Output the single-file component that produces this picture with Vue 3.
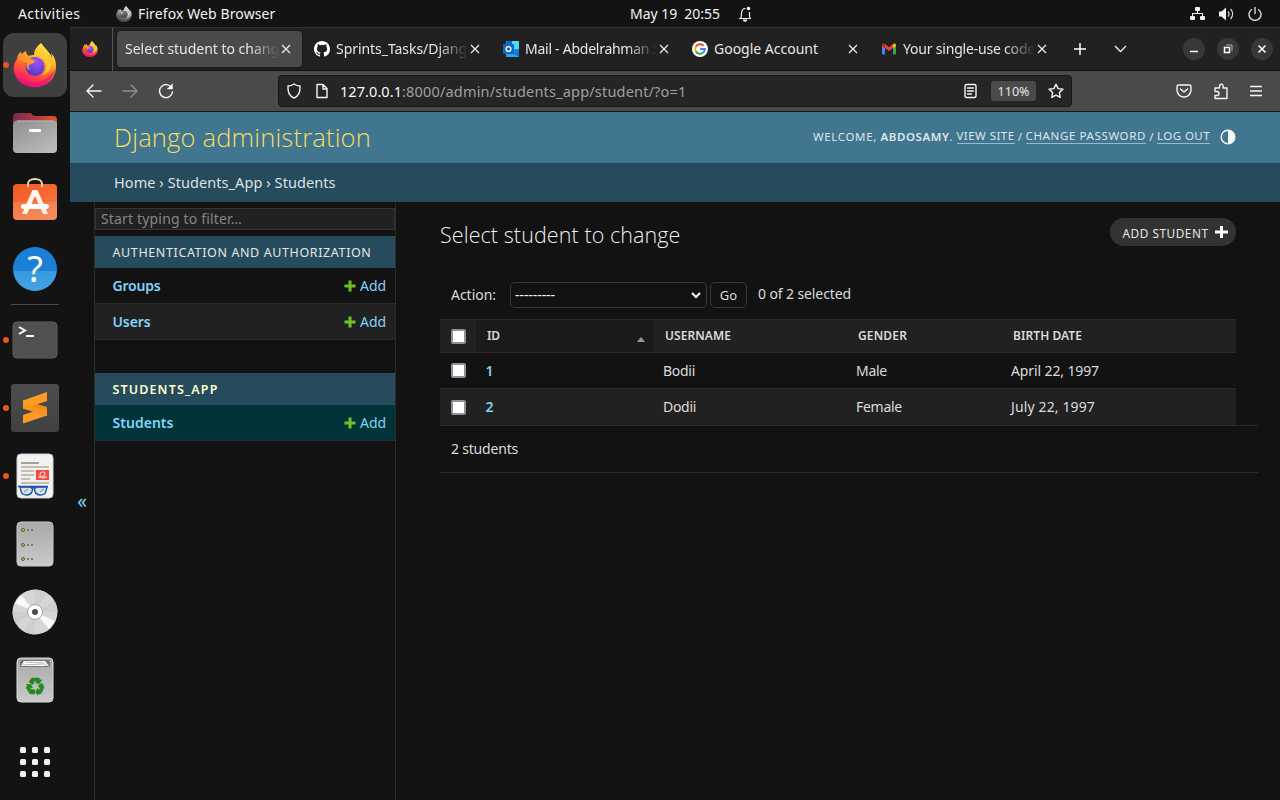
<script setup>
// Adjusts tracking so that a label spans the given width in pixels.
const vFit = {
  mounted(el, { value }) {
    const n = el.textContent.length
    const natural = el.getBoundingClientRect().width
    el.style.letterSpacing = (value - natural) / n + 'px'
  }
}

const tabs = [
  { icon: 'github', label: 'Sprints_Tasks/Djang', width: 131, fade: true },
  { icon: 'outlook', label: 'Mail - Abdelrahman S', width: 135, fade: true },
  { icon: 'google', label: 'Google Account', width: 104, fade: false },
  { icon: 'gmail', label: 'Your single-use code', width: 132, fade: true }
]

const groups = [
  { title: 'AUTHENTICATION AND AUTHORIZATION', width: 259, models: [{ name: 'Groups', width: 48 }, { name: 'Users', width: 38 }] },
  { title: 'STUDENTS_APP', width: 106, current: true, models: [{ name: 'Students', width: 61 }] }
]

const rows = [
  { id: 1, name: 'Bodii', nw: 32, gender: 'Male', gw: 31, birth: 'April 22, 1997', bw: 88 },
  { id: 2, name: 'Dodii', nw: 33, gender: 'Female', gw: 46, birth: 'July 22, 1997', bw: 84 }
]
</script>

<template>
  <div class="desktop">
    <svg class="defs" width="0" height="0">
      <defs>
        <linearGradient id="ffBody" x1="0.8" y1="0" x2="0.35" y2="1">
          <stop offset="0" stop-color="#fff44f" /><stop offset=".35" stop-color="#ffb52b" />
          <stop offset=".6" stop-color="#ff6a33" /><stop offset=".82" stop-color="#ff2f52" /><stop offset="1" stop-color="#e5107e" />
        </linearGradient>
        <radialGradient id="ffGlobe" cx=".6" cy=".25" r=".8">
          <stop offset="0" stop-color="#a452f5" /><stop offset=".55" stop-color="#7543e5" /><stop offset="1" stop-color="#4a37b0" />
        </radialGradient>
        <symbol id="firefox" viewBox="0 0 44 44">
          <path fill="url(#ffBody)" d="M28 0c-5 4-7 8-7 12-2 0-4 0-5 1-3-2-3-4-3-5-3 1-4 3-4 3-2-1-1-3-1-3-3 3-4 6-4 8C1 20 0 24 1 29c2 9 10 15 21 15 13 0 21-9 21-21 0-6-2-10-5-13 1 2 1 4 1 5-1-4-4-6-6-9-3-3-4-5-5-6z" />
          <path fill="#e9127d" d="M2 30c5 10 15 13 27 8 6-3 10-7 13-12-2 11-10 18-20 18C12 44 5 39 2 30z" opacity=".75" />
          <circle cx="22" cy="23.500" r="9.500" fill="url(#ffGlobe)" />
          <path fill="#ff9a27" d="M5 16c3-2 7-2 10-1 2 1 6 1 7 3-1 3-5 3-6 4-1 1 0 4 1 5-4-1-4-5-3-7-3-1-5-3-9-4z" />
          <path fill="#ffcf37" d="M21 13c4-1 9 1 11 5 3 5 1 12-4 14 9-1 12-9 9-15-2-4-7-8-8-13-3 2-3 6-2 8-2-1-4-1-6 1z" opacity=".8" />
        </symbol>
      </defs>
    </svg>

    <header class="topbar">
      <span v-fit="62.500" class="activities">Activities</span>
      <span class="app">
        <svg class="gray" width="16" height="16"><use href="#firefox" /></svg>
        <span v-fit="137.500">Firefox Web Browser</span>
      </span>
      <span class="clock"><span v-fit="90">May 19&nbsp; 20:55</span>
        <svg width="14" height="16" viewBox="0 0 14 16" fill="none" stroke="#f2f2f2" stroke-width="1.200">
          <path d="M1 12.500h12M2.500 12.500c1-1 1-2 1-5C3.500 4 5 2.500 7.500 2.500M11.500 6v4c0 1 .2 2 1 2.500" /><circle cx="10.500" cy="2.500" r="1.200" fill="#f2f2f2" /><path d="M5.500 14a1.500 1.200 0 0 0 3 0z" fill="#f2f2f2" />
        </svg>
      </span>
      <span class="tray">
        <svg width="15" height="14" viewBox="0 0 15 14" fill="#f2f2f2"><rect x="5" width="5" height="4" rx="1" /><rect y="9" width="5" height="4" rx="1" /><rect x="10" y="9" width="5" height="4" rx="1" /><path d="M7 4h1v2h5v3h-1V7H3v2H2V6h5z" /></svg>
        <svg width="15" height="14" viewBox="0 0 15 14"><path d="M0 4.500h2.500L7 .5v13L2.500 9.500H0z" fill="#f2f2f2" /><path d="M9 4.500a3.500 3.500 0 0 1 0 5M11.500 2a7 7 0 0 1 0 10" fill="none" stroke="#ddd" stroke-width="1.200" /></svg>
        <svg width="14" height="14" viewBox="0 0 14 14" fill="none" stroke="#e8e8e8" stroke-width="1.300"><path d="M4 2.200a6 6 0 1 0 6 0M7 0v7" /></svg>
      </span>
    </header>

    <div class="body">
      <nav class="dock">
        <div class="slot active run"><svg width="44" height="44"><use href="#firefox" /></svg></div>
        <div class="slot">
          <svg width="46" height="42" viewBox="0 0 46 42">
            <defs>
              <linearGradient id="fold"><stop offset="0" stop-color="#77294f" /><stop offset=".5" stop-color="#b03a40" /><stop offset="1" stop-color="#e95420" /></linearGradient>
              <linearGradient id="foldFront" x2=".7" y2="1"><stop offset="0" stop-color="#8e8e8e" /><stop offset="1" stop-color="#b9b9b9" /></linearGradient>
            </defs>
            <path d="M1 5a4 4 0 0 1 4-4h13c2 0 2 3 5 3h18a4 4 0 0 1 4 4v14H1z" fill="url(#fold)" />
            <rect x="1" y="8.500" width="44" height="32.500" rx="4" fill="url(#foldFront)" /><path d="M5 9h36" stroke="#b5b5b5" />
            <rect x="17" y="17" width="12" height="3" rx="1" fill="#fff" />
          </svg>
        </div>
        <div class="slot">
          <svg class="lift" width="46" height="44" viewBox="0 0 46 44">
            <defs><linearGradient id="soft" x2=".6" y2="1"><stop offset="0" stop-color="#f4571f" /><stop offset="1" stop-color="#f37b43" /></linearGradient></defs>
            <rect x="1" y="7" width="44" height="36" rx="4" fill="url(#soft)" /><path d="M1 25h44v14a4 4 0 0 1-4 4H5a4 4 0 0 1-4-4z" fill="#fff" opacity=".12" />
            <path d="M16 10V7c0-3 3-5 7-5s7 2 7 5v3" fill="none" stroke="#f4d9a5" stroke-width="2" />
            <path d="M20.500 13h5L36 37h-5l-8-18-8 18h-5z" fill="#fff3ec" /><rect x="9" y="27" width="28" height="5" rx="2.500" fill="#fff" />
          </svg>
        </div>
        <div class="slot"><div class="help"><span>?</span></div></div>
        <i class="divider"></i>
        <div class="slot run">
          <svg width="46" height="38" viewBox="0 0 46 38"><rect x="1" y="1" width="44" height="36" rx="4" fill="#505050" stroke="#5e5e5e" /><path d="M7 6l6 3.500L7 13" fill="none" stroke="#fff" stroke-width="2" /><path d="M14 15h8" stroke="#fff" stroke-width="2" /></svg>
        </div>
        <div class="slot run">
          <svg width="48" height="48" viewBox="0 0 48 48"><defs><linearGradient id="sub" x2="0" y2="1"><stop offset="0" stop-color="#4d4d4d" /><stop offset="1" stop-color="#404040" /></linearGradient></defs><rect width="48" height="48" rx="3" fill="url(#sub)" /><path d="M12 31l24-8v8.500L12 39.500z" fill="#ff9a22" /><path d="M12 16v8.500l24 7.500v-9l-12-3.500z" fill="#f08c16" /><path d="M12 16.500L36 8v9l-12 4-12 3.500z" fill="#ff9a22" /><path d="M12 24.500v-4l24 6v5.500z" fill="#f99420" /></svg>
        </div>
        <div class="slot run">
          <svg width="38" height="46" viewBox="0 0 38 46">
            <rect x="1" y="1" width="36" height="44" rx="4" fill="#f1f1f1" stroke="#d4d4d4" />
            <path d="M5 10h18" stroke="#aba08c" stroke-width="2" /><path d="M5 14h28M5 18h13M5 22h13M5 26h9M5 30h28" stroke="#c6bdb0" stroke-width="2" />
            <rect x="20" y="17" width="13" height="10" fill="#f04b43" /><path d="M22 24c3 1 7-1 7-3.500s-5-2-5 1.500 4 3.500 7 1.500" fill="none" stroke="#ffd3ce" stroke-width="1.200" />
            <path d="M4 34h10q3 0 2.500 3-1 5-6 5T5 38zM31 34H21q-3 0-2.500 3 1 5 6 5t5.500-4z" fill="#d3d9e2" fill-opacity=".8" stroke="#1b56a8" stroke-width="1.400" />
            <path d="M2 33.500h30M15 35.500q2.500-2 5 0" fill="none" stroke="#1b56a8" stroke-width="1.600" /><path d="M8 39l4-3M24 39l4-3" stroke="#888" />
          </svg>
        </div>
        <div class="slot">
          <svg width="38" height="46" viewBox="0 0 38 46"><defs><linearGradient id="metal" x2="0" y2="1"><stop offset="0" stop-color="#a9a9a9" /><stop offset="1" stop-color="#cacaca" /></linearGradient></defs>
            <rect x="1" y="1" width="36" height="44" rx="4" fill="url(#metal)" stroke="#ccc" />
            <g v-for="y in [9, 24, 38]" :key="y"><circle cx="7" :cy="y" r="1.600" fill="#8bc34a" stroke="#5f6b48" /><path :d="`M11 ${y}h2M15 ${y}h2`" stroke="#777" stroke-width="2" /></g>
          </svg>
        </div>
        <div class="slot">
          <svg width="46" height="46" viewBox="0 0 46 46"><clipPath id="disc"><circle cx="23" cy="23" r="22.500" /></clipPath><g clip-path="url(#disc)"><path d="M0 0h46v46H0z" fill="#d6d6d6" /><path d="M23 23V0h14zM23 23h23V11zM23 23L0 23v14zM23 23v23H10z" fill="#cecece" /><path d="M23 23L3 14l6-8zM23 23l20 9-6 8z" fill="#fafafa" /></g><circle cx="23" cy="23" r="7.500" fill="#fff" stroke="#afa58e" /><circle cx="23" cy="23" r="3" fill="#4d4d4d" /></svg>
        </div>
        <div class="slot">
          <svg width="38" height="46" viewBox="0 0 38 46"><rect x="1" y="1" width="36" height="44" rx="4" fill="url(#metal)" stroke="#ddd" /><path d="M4 10V5q0-2 2-2h26q2 0 2 2v5z" fill="#777" /><path d="M5 9l3-5h21l4 5z" fill="#fff" /><path d="M6 8l22-1 5 3M9 5l19 1" stroke="#999" fill="none" stroke-width=".7" />
            <text x="19" y="37.500" class="recycle">♻</text>
          </svg>
        </div>
        <div class="launcher"><i v-for="n in 9" :key="n"></i></div>
      </nav>

      <section class="window">
        <div class="tabbar">
          <div class="pinned"><svg width="16" height="16"><use href="#firefox" /></svg></div>
          <div class="tab selected"><span class="label fade"><span v-fit="154">Select student to chang</span></span>
            <svg class="x" width="10" height="10" viewBox="0 0 10 10"><path d="M1 1l8 8M9 1l-8 8" /></svg>
          </div>
          <div v-for="t in tabs" :key="t.icon" class="tab">
            <svg v-if="t.icon === 'github'" width="16" height="16" viewBox="0 0 16 16" fill="#fff"><path d="M8 0C3.580 0 0 3.580 0 8c0 3.540 2.290 6.530 5.470 7.590.4.070.55-.17.55-.38 0-.19-.01-.82-.01-1.490-2.010.37-2.530-.49-2.690-.94-.09-.23-.48-.94-.82-1.130-.28-.15-.68-.52-.01-.53.63-.01 1.080.58 1.230.82.72 1.210 1.870.87 2.330.66.07-.52.28-.87.51-1.070-1.780-.2-3.640-.89-3.640-3.950 0-.87.31-1.590.82-2.150-.08-.2-.36-1.020.08-2.120 0 0 .67-.21 2.200.82a7.600 7.600 0 0 1 4 0c1.530-1.040 2.200-.82 2.200-.82.44 1.100.16 1.920.08 2.120.51.56.82 1.270.82 2.150 0 3.070-1.870 3.750-3.650 3.950.29.25.54.73.54 1.480 0 1.070-.01 1.930-.01 2.200 0 .21.15.46.55.38A8.010 8.010 0 0 0 16 8c0-4.420-3.580-8-8-8z" /></svg>
            <svg v-else-if="t.icon === 'outlook'" width="16" height="16" viewBox="0 0 16 16"><path d="M3 0h13v16H3z" fill="#1490df" /><path d="M9 0h7v8H9z" fill="#50d9ff" /><path d="M4 0h5v5H4z" fill="#0a68c0" /><path d="M3 8l7 4 6-4v8H3z" fill="#28a8ea" /><path d="M9 12l7 4V8z" fill="#1678cf" /><rect y="3" width="11" height="10" rx="1" fill="#1066b8" /><circle cx="5.500" cy="8" r="2.400" fill="none" stroke="#fff" stroke-width="1.400" /></svg>
            <svg v-else-if="t.icon === 'google'" width="16" height="16" viewBox="0 0 16 16"><circle cx="8" cy="8" r="8" fill="#fff" /><g fill="none" stroke-width="2"><path d="M11.500 4.700A4.900 4.900 0 0 0 3.700 5.700" stroke="#ea4335" /><path d="M3.700 5.700a4.900 4.900 0 0 0 0 4.600" stroke="#fbbc05" /><path d="M3.700 10.300a4.900 4.900 0 0 0 7.500 1.300" stroke="#34a853" /><path d="M11.200 11.600A4.600 4.600 0 0 0 12.900 8H8" stroke="#4285f4" /></g></svg>
            <svg v-else width="16" height="16" viewBox="0 0 16 16"><path d="M1 4h3v9.500H2a1 1 0 0 1-1-1z" fill="#4285f4" /><path d="M12 4h3v8.500a1 1 0 0 1-1 1h-2z" fill="#34a853" /><path d="M1 6V4c0-1.800 2-2 3-1l4 3.200L12 3v4L8 10 4 7z" fill="#ea4335" /><path d="M1 4c0-1.800 2-2 3-1v4L1 5z" fill="#c5221f" /><path d="M12 3c1-1 3-.8 3 1v1l-3 2.500z" fill="#fbbc04" /></svg>
            <span class="label" :class="{ fade: t.fade }"><span v-fit="t.width">{{ t.label }}</span></span>
            <svg class="x" width="10" height="10" viewBox="0 0 10 10"><path d="M1 1l8 8M9 1l-8 8" /></svg>
          </div>
          <svg class="plus" width="12" height="12" viewBox="0 0 12 12"><path d="M6 0v12M0 6h12" /></svg>
          <svg class="chevron" width="13" height="8" viewBox="0 0 13 8"><path d="M1 1l5.500 5.500L12 1" /></svg>
          <div class="controls">
            <span><svg width="10" height="10" viewBox="0 0 10 10"><path d="M1 7.500h8" /></svg></span>
            <span><svg width="10" height="10" viewBox="0 0 10 10"><path d="M1.500 3.500h5v5h-5z" /><path d="M3 1h6v6" opacity=".6" stroke-width="1" /></svg></span>
            <span><svg width="10" height="10" viewBox="0 0 10 10"><path d="M1.500 1.500l7 7M8.500 1.500l-7 7" /></svg></span>
          </div>
        </div>

        <div class="toolbar">
          <svg class="back" width="16" height="14" viewBox="0 0 16 14"><path d="M7 1L1 7l6 6M1 7h14" /></svg>
          <svg class="forward" width="16" height="14" viewBox="0 0 16 14"><path d="M9 1l6 6-6 6M15 7H1" /></svg>
          <svg class="reload" width="16" height="16" viewBox="0 0 16 16"><path d="M13.500 4.500A6.500 6.500 0 1 0 14.500 9" /><path d="M14.500 1v5h-5z" fill="#fff" stroke-width=".5" /></svg>
          <div class="urlbar">
            <svg width="16" height="16" viewBox="0 0 16 16"><path d="M8 1c2 1.500 4 2 6 2 .5 6-1 10-6 12C3 13 1.500 9 2 3c2 0 4-.5 6-2z" /></svg>
            <svg class="page-icon" width="16" height="16" viewBox="0 0 16 16"><path d="M3 1.500h6l4 4v9H3zM9 2v4h4" /></svg>
            <span class="url"><b v-fit="62">127.0.0.1</b><span v-fit="284.500">:8000/admin/students_app/student/?o=1</span></span>
            <svg class="reader" width="14" height="16" viewBox="0 0 14 16"><rect x="1" y="1.500" width="11" height="13" rx="1.500" /><path d="M3.500 5h6M3.500 8h6M3.500 11h4" /></svg>
            <span class="zoom">110%</span>
            <svg width="16" height="16" viewBox="0 0 16 16"><path d="M8 1.200l2.100 4.400 4.800.6-3.500 3.400.8 4.800L8 12.100l-4.200 2.300.8-4.800L1.100 6.200l4.800-.6z" /></svg>
          </div>
          <div class="tools">
            <svg width="16" height="14" viewBox="0 0 16 14"><path d="M2.500 1h11Q15 1 15 2.500V6a7 7 0 0 1-14 0V2.500Q1 1 2.500 1zM4.500 5L8 8l3.500-3" /></svg>
            <svg width="16" height="17" viewBox="0 0 16 17"><path d="M2 8.500V5h4.500V3a1.800 1.800 0 0 1 3.600 0v2H14v10.500H2v-3h2a2 2 0 0 0 0-4z" /></svg>
            <svg width="12" height="12" viewBox="0 0 12 12"><path d="M0 1.500h12M0 6h12M0 10.500h12" /></svg>
          </div>
        </div>

        <div class="site-header">
          <h1 v-fit="257">Django administration</h1>
          <div class="user-tools">
            <span v-fit="67.500">WELCOME,&nbsp;</span><strong v-fit="69">ABDOSAMY</strong><span v-fit="7">.&nbsp;</span>
            <a v-fit="58">VIEW SITE</a><span class="slash">/</span><a v-fit="120.500">CHANGE PASSWORD</a><span class="slash">/</span><a v-fit="53">LOG OUT</a>
            <svg width="16" height="16" viewBox="0 0 16 16"><circle cx="8" cy="8" r="6.800" fill="none" stroke="#f7f7f7" stroke-width="1.400" /><path d="M8 1a7 7 0 0 1 0 14z" fill="#f7f7f7" /></svg>
          </div>
        </div>
        <div class="breadcrumbs"><span v-fit="221.500">Home › Students_App › Students</span></div>

        <div class="content">
          <div class="toggle">«</div>
          <aside>
            <div class="filter"><span v-fit="141">Start typing to filter…</span></div>
            <div v-for="g in groups" :key="g.title" class="module" :class="{ current: g.current }">
              <div class="caption"><span v-fit="g.width">{{ g.title }}</span></div>
              <div v-for="m in g.models" :key="m.name" class="model">
                <b v-fit="m.width">{{ m.name }}</b>
                <span class="add"><svg width="12" height="12" viewBox="0 0 12 12"><path d="M6 .5v11M.5 6h11" stroke="#70bf2b" stroke-width="3" /></svg><span v-fit="26">Add</span></span>
              </div>
            </div>
          </aside>
          <main>
            <div class="title-row">
              <h2 v-fit="240.500">Select student to change</h2>
              <a class="add-student"><span v-fit="86">ADD STUDENT</span><svg width="13" height="12" viewBox="0 0 13 12"><path d="M6.500 0v12M0 6h13" stroke="#fff" stroke-width="3" /></svg></a>
            </div>
            <div class="actions">
              <span v-fit="45" class="action-label">Action:</span>
              <div class="select"><span v-fit="40">---------</span><svg width="10" height="7" viewBox="0 0 10 7"><path d="M1 1l4 4 4-4" fill="none" stroke="#fff" stroke-width="2" /></svg></div>
              <div class="go">Go</div>
              <span v-fit="93" class="count">0 of 2 selected</span>
            </div>
            <div class="table">
              <div class="row head">
                <div><i class="check"></i></div>
                <div class="sorted"><span v-fit="13">ID</span><i class="arrow"></i></div>
                <div><span v-fit="66">USERNAME</span></div><div><span v-fit="49">GENDER</span></div><div><span v-fit="69">BIRTH DATE</span></div>
              </div>
              <div v-for="r in rows" :key="r.id" class="row">
                <div><i class="check"></i></div><div class="id">{{ r.id }}</div>
                <div><span v-fit="r.nw">{{ r.name }}</span></div><div><span v-fit="r.gw">{{ r.gender }}</span></div><div><span v-fit="r.bw">{{ r.birth }}</span></div>
              </div>
            </div>
            <div class="paginator"><span v-fit="67">2 students</span></div>
          </main>
        </div>
      </section>
    </div>
  </div>
</template>

<style>
body { background: #121212; }
</style>

<style scoped>
* { box-sizing: border-box; }
.desktop { width: 1280px; height: 800px; overflow: hidden; background: #131313; color: #e6e6e6; font: 14.500px/20px "Noto Sans", "Open Sans", sans-serif; white-space: nowrap; position: relative; display: flex; flex-direction: column; }
.defs { position: absolute; }
svg { flex: none; display: block; }
span, b, strong, a { display: inline-block; }
.topbar { height: 27px; flex: none; display: flex; align-items: center; padding-left: 18px; color: #f2f2f2; font-size: 14px; }
.app { display: flex; align-items: center; gap: 6px; margin-left: 35.500px; }
.gray { filter: grayscale(1); }
.clock { display: flex; align-items: center; gap: 18px; margin-left: 354.500px; }
.tray { display: flex; align-items: center; gap: 14px; margin-left: auto; margin-right: 18px; }
.body { flex: 1; display: flex; min-height: 0; }
.dock { width: 70px; flex: none; padding-top: 6px; display: flex; flex-direction: column; align-items: center; }
.slot { width: 64px; height: 64px; flex: none; display: flex; align-items: center; justify-content: center; border-radius: 11px; position: relative; margin-bottom: 4px; }
.slot.active { background: #3f3f3f; }
.slot.run::before { content: ""; position: absolute; left: 0; top: 29px; width: 6px; height: 6px; border-radius: 50%; background: #e95420; }
.lift { margin-top: -5px; }
.help { width: 44px; height: 44px; border-radius: 50%; background: linear-gradient(#1b7fd6 0 54%, #359ae0 54%, #46a4e6); display: flex; align-items: center; justify-content: center; font: 36px/44px "Noto Sans", sans-serif; color: #fff; }
.recycle { font: 24px "DejaVu Sans", sans-serif; text-anchor: middle; fill: #23891b; stroke: #23891b; stroke-width: .6px; }
.divider { width: 48px; height: 1px; flex: none; background: #4a4a4a; margin: -1px 0 3px; }
.launcher { display: grid; grid-template-columns: repeat(3, 6px); gap: 6px; margin-top: 31px; }
.launcher i { width: 6px; height: 6px; background: #f2f2f2; border-radius: 1.500px; }
.window { flex: 1; min-width: 0; display: flex; flex-direction: column; }
.tabbar { height: 44px; flex: none; background: #212121; border-top: 1px solid #333; border-bottom: 1px solid #131313; display: flex; align-items: center; }
.pinned { width: 43px; height: 43px; border-right: 1px solid #555; padding-left: 12px; display: flex; align-items: center; }
.tab { width: 189px; height: 36px; flex: none; display: flex; align-items: center; padding: 0 11px 0 12px; gap: 6px; font-size: 14px; }
.tab.selected { width: 185px; margin: 0 0 0 4px; background: #4a4a4a; border-radius: 4px; padding: 0 11px 0 8px; box-shadow: 0 0 2px #111; }
.label { flex: 1; min-width: 0; overflow: hidden; margin-right: -4px; }
.fade { mask-image: linear-gradient(90deg, #000 calc(100% - 30px), transparent); }
.x { stroke: #eee; stroke-width: 1.200; fill: none; }
.plus { margin-left: 15.500px; stroke: #fff; stroke-width: 1.500; }
.chevron { margin-left: 28px; fill: none; stroke: #eee; stroke-width: 1.400; }
.controls { display: flex; gap: 12px; margin-left: auto; margin-right: 7px; }
.controls span { width: 22px; height: 22px; border-radius: 50%; background: #383838; display: flex; align-items: center; justify-content: center; }
.controls svg { fill: none; stroke: #fff; stroke-width: 1.500; }
.toolbar { height: 41px; flex: none; background: #4a4a4a; border-bottom: 1px solid #171717; display: flex; align-items: center; padding-left: 16px; }
.toolbar svg { fill: none; stroke: #f6f6f6; stroke-width: 1.400; stroke-linejoin: round; stroke-linecap: round; }
.forward { margin-left: 20px; opacity: .4; }
.reload { margin-left: 20px; }
.urlbar { width: 794px; height: 32px; margin-left: 104px; background: #252525; border: 1px solid #171717; border-radius: 4px; display: flex; align-items: center; padding: 0 7px; }
.page-icon { margin-left: 12px; }
.url { margin-left: 10px; color: #a0a0a0; font-size: 14.500px; }
.url b { color: #fafafa; font-weight: 400; }
.reader { margin-left: auto; }
.zoom { width: 45px; height: 20px; margin: 0 12px 0 13px; border-radius: 3px; background: #4a4a4a; text-align: center; font-size: 12.500px; line-height: 21px; }
.tools { display: flex; align-items: center; gap: 21px; margin-left: auto; margin-right: 18px; }
.site-header { height: 51px; flex: none; background: #417690; display: flex; align-items: center; padding: 0 44px; }
h1 { margin: -1px 0 0; font: 300 25.500px/30px "Open Sans", "Noto Sans", sans-serif; color: #f5dd5d; }
.user-tools { display: flex; align-items: center; margin: -2px 0 0 auto; font-size: 11.500px; line-height: 14px; color: #dde6ea; }
.user-tools strong { font-weight: 600; }
.user-tools a { border-bottom: 1px solid #9bb8c6; line-height: 14px; }
.slash { width: 11px; text-align: center; }
.user-tools svg { margin-left: 10px; }
.breadcrumbs { height: 39px; flex: none; background: #264b5d; padding: 0 44px 1px; display: flex; align-items: center; color: #dbe2e5; }
.content { flex: 1; min-height: 0; display: flex; background: #121212; }
.toggle { width: 24px; display: flex; align-items: center; justify-content: center; color: #81d4fa; font-size: 19px; }
aside { width: 302px; border: solid #2b2b2b; border-width: 0 1px; padding-top: 6px; }
.filter { height: 22px; border: 1px solid #353535; background: #212121; color: #858585; display: flex; align-items: center; padding-left: 5px; margin-bottom: 6px; font-size: 14px; }
.module { margin-bottom: 33px; }
.caption { height: 32px; background: #264b5d; padding-left: 17.500px; display: flex; align-items: center; font-size: 12.500px; color: #e6e6e6; padding-top: 1px; }
.current .caption { font-weight: 600; color: #ffffcc; }
.model { height: 36px; border-bottom: 1px solid #2b2b2b; padding: 0 9px 0 17.500px; display: flex; align-items: center; justify-content: space-between; color: #81d4fa; font-size: 14px; }
.model b { font-weight: 600; }
.model:nth-child(odd) { background: #212121; }
.current .model { background: #003438; }
.add { display: flex; align-items: center; gap: 4px; }
main { flex: 1; padding: 16px 22px 0 44px; }
.title-row { display: flex; align-items: flex-start; padding-right: 22px; height: 64px; justify-content: space-between; }
h2 { margin: 2px 0 0; font: 300 21.500px/30px "Open Sans", "Noto Sans", sans-serif; color: #eee; }
.add-student { width: 126px; height: 28px; border-radius: 14px; background: #333; display: flex; align-items: center; padding: 1px 0 0 12.500px; gap: 6.500px; font-size: 11.800px; }
.add-student svg { margin-top: -2px; }
.actions { height: 26px; display: flex; align-items: center; padding-left: 11px; font-size: 14px; color: #dcdcdc; }
.select { width: 197px; height: 26px; margin-left: 14px; border: 1px solid #3a3a3a; border-radius: 5px; display: flex; align-items: center; justify-content: space-between; padding: 0 5px 0 4px; color: #fff; }
.go { width: 37px; height: 26px; margin-left: 3px; border: 1px solid #3a3a3a; border-radius: 5px; text-align: center; line-height: 25px; font-size: 13px; }
.count { margin: -2px 0 0 11px; }
.table { width: 796px; margin-top: 11px; color: #dcdcdc; }
.row { height: 36px; display: grid; grid-template-columns: 36px 178px 193px 155px 1fr; border-bottom: 1px solid #2b2b2b; font-size: 14px; }
.row > div { display: flex; align-items: center; padding-left: 9px; }
.row > div:first-child { padding-left: 11px; }
.row:last-child { height: 37px; background: #212121; }
.head { height: 34px; border-top: 1px solid #2b2b2b; background: #212121; font-size: 12px; font-weight: 600; }
.head > div:not(:first-child) { padding-left: 11px; }
.head > .sorted { background: #1a1a1a; justify-content: space-between; padding-right: 9px; }
.arrow { border: solid transparent; border-width: 0 4.500px 5px; border-bottom-color: #999; margin-top: 7px; }
.check { width: 15px; height: 15px; background: #fff; border: 2px solid #8f8f9d; border-radius: 2px; }
.row > .id { color: #81d4fa; font-weight: 600; padding-left: 9.500px; }
.paginator { height: 48px; margin-top: -1px; border: solid #2b2b2b; border-width: 1px 0; padding-left: 11px; display: flex; align-items: center; font-size: 14px; color: #dcdcdc; }
</style>
